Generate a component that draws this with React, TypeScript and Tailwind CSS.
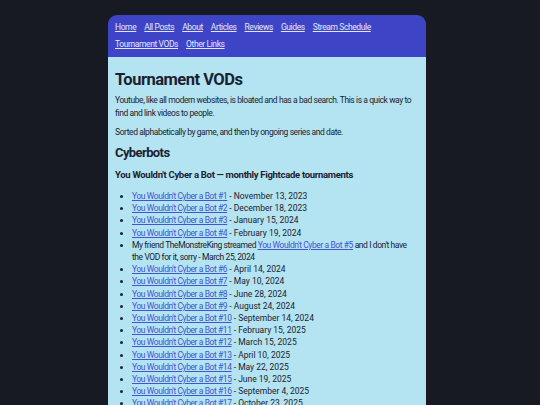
import React from 'react';

const navLinks = ['Home', 'All Posts', 'About', 'Articles', 'Reviews', 'Guides', 'Stream Schedule', 'Tournament VODs', 'Other Links'];

const vods: { n: number; date: string }[] = [
  { n: 1, date: 'November 13, 2023' },
  { n: 2, date: 'December 18, 2023' },
  { n: 3, date: 'January 15, 2024' },
  { n: 4, date: 'February 19, 2024' },
  { n: 5, date: 'March 25, 2024' },
  { n: 6, date: 'April 14, 2024' },
  { n: 7, date: 'May 10, 2024' },
  { n: 8, date: 'June 28, 2024' },
  { n: 9, date: 'August 24, 2024' },
  { n: 10, date: 'September 14, 2024' },
  { n: 11, date: 'February 15, 2025' },
  { n: 12, date: 'March 15, 2025' },
  { n: 13, date: 'April 10, 2025' },
  { n: 14, date: 'May 22, 2025' },
  { n: 15, date: 'June 19, 2025' },
  { n: 16, date: 'September 4, 2025' },
  { n: 17, date: 'October 23, 2025' },
];

function VodLink({ n }: { n: number }) {
  return (
    <a href="#" className="text-[#4453d0] underline">
      You Wouldn't Cyber a Bot #{n}
    </a>
  );
}

export default function App() {
  return (
    <div className="h-screen overflow-hidden bg-[#171923] pt-[15px] font-['Roboto',sans-serif]">
      <div className="ml-[108px] w-[318px] overflow-hidden rounded-t-[9px]">
        <nav className="flex flex-wrap gap-x-[8px] gap-y-[5px] bg-[#3d45c6] px-[7px] pb-[7px] pt-[6px] text-[8.5px] leading-[12px] tracking-[-0.4px]">
          {navLinks.map((l) => (
            <a key={l} href="#" className="text-[#e4e6ff] underline">
              {l}
            </a>
          ))}
        </nav>
        <main className="bg-[#b4e4f1] px-[7px] pb-4 pt-[12px] text-[8.5px] leading-[13px] tracking-[-0.42px] text-[#1c2130]">
          <h1 className="text-[16.5px] font-bold leading-[22px] tracking-[-0.5px]">Tournament VODs</h1>
          <p className="mt-[3px]">
            Youtube, like all modern websites, is bloated and has a bad search. This is a quick way to find and link videos to people.
          </p>
          <p className="mt-[6px]">Sorted alphabetically by game, and then by ongoing series and date.</p>
          <h2 className="mt-[5px] text-[13px] font-bold leading-[18px] tracking-[-0.6px]">Cyberbots</h2>
          <h3 className="mt-[7px] text-[9.5px] font-bold leading-[12px] tracking-[-0.3px]">You Wouldn't Cyber a Bot — monthly Fightcade tournaments</h3>
          <ul className="mt-[9px] list-disc pl-[17px] leading-[12.2px]">
            {vods.map((v) =>
              v.n === 5 ? (
                <li key={v.n}>
                  My friend TheMonstreKing streamed <VodLink n={5} /> and I don't have the VOD for it, sorry - {v.date}
                </li>
              ) : (
                <li key={v.n}>
                  <VodLink n={v.n} />
                  <span className="tracking-normal"> - {v.date}</span>
                </li>
              )
            )}
          </ul>
        </main>
      </div>
    </div>
  );
}
